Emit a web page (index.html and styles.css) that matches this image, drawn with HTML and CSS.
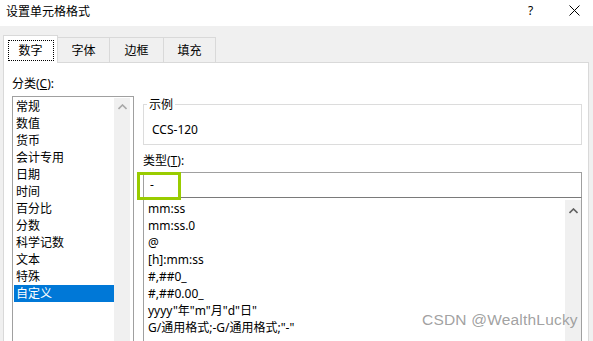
FILE: index.html
```html
<!DOCTYPE html>
<html lang="zh-CN">
<head>
<meta charset="utf-8">
<title>设置单元格格式</title>
<link rel="stylesheet" href="styles.css">
</head>
<body>
<div class="window">
  <div class="titlebar">
    <span class="title">设置单元格格式</span>
    <span class="help">?</span>
    <span class="close"><svg width="11" height="11" viewBox="0 0 11 11"><path d="M0.5 0.5 L10.5 10.5 M10.5 0.5 L0.5 10.5" stroke="#000" stroke-width="1" fill="none"/></svg></span>
  </div>
  <div class="body">
    <div class="tabs">
      <div class="tab active"><span class="focus">数字</span></div>
      <div class="tab">字体</div>
      <div class="tab">边框</div>
      <div class="tab">填充</div>
    </div>
    <div class="panel">
      <div class="left">
        <div class="label">分类(<u>C</u>):</div>
        <div class="listbox">
          <ul class="items">
            <li>常规</li>
            <li>数值</li>
            <li>货币</li>
            <li>会计专用</li>
            <li>日期</li>
            <li>时间</li>
            <li>百分比</li>
            <li>分数</li>
            <li>科学记数</li>
            <li>文本</li>
            <li>特殊</li>
            <li class="selected">自定义</li>
          </ul>
          <div class="scrollbar light"><svg width="9" height="6" viewBox="0 0 9 6"><path d="M0.5 5 L4.5 1 L8.5 5" stroke="#a8a8a8" stroke-width="1.6" fill="none"/></svg></div>
        </div>
      </div>
      <div class="right">
        <fieldset class="sample">
          <legend>示例</legend>
          <div class="sample-value">CCS-120</div>
        </fieldset>
        <div class="label type-label">类型(<u>T</u>):</div>
        <div class="input-wrap">
          <div class="input">-</div>
          <div class="highlight"></div>
        </div>
        <div class="listbox formats">
          <ul class="items">
            <li>mm:ss</li>
            <li>mm:ss.0</li>
            <li>@</li>
            <li>[h]:mm:ss</li>
            <li>#,##0_</li>
            <li>#,##0.00_</li>
            <li>yyyy"年"m"月"d"日"</li>
            <li>G/通用格式;-G/通用格式;"-"</li>
          </ul>
          <div class="scrollbar"><svg width="9" height="6" viewBox="0 0 9 6"><path d="M0.5 5 L4.5 1 L8.5 5" stroke="#606060" stroke-width="1.6" fill="none"/></svg></div>
        </div>
      </div>
    </div>
  </div>
  <div class="watermark">CSDN @WealthLucky</div>
</div>
</body>
</html>
```
FILE: styles.css
```css
html, body {
  margin: 0;
  padding: 0;
}
body {
  width: 593px;
  height: 341px;
  overflow: hidden;
  font-family: "Noto Sans", "Noto Sans CJK SC", sans-serif;
  font-size: 12px;
  color: #000;
  background: #f0f0f0;
}
.window {
  position: relative;
  width: 593px;
  height: 341px;
  overflow: hidden;
}
.titlebar {
  height: 26px;
  background: #fff;
  display: flex;
  align-items: center;
}
.title {
  padding-left: 6px;
  font-size: 12px;
  line-height: 17px;
  margin-top: -4px;
  flex: 1;
}
.help {
  width: 10px;
  margin-right: 31px;
  font-size: 12px;
  line-height: 17px;
  margin-top: -6px;
}
.close {
  width: 11px;
  height: 11px;
  margin-right: 13px;
  margin-top: -6px;
  display: flex;
}
.body {
  padding-top: 9px;
}
.tabs {
  display: flex;
  align-items: flex-end;
  margin-left: 3px;
  height: 27px;
  position: relative;
  z-index: 1;
}
.tab {
  box-sizing: border-box;
  height: 25px;
  border: 1px solid #d9d9d9;
  border-bottom: none;
  border-left: none;
  background: #f0f0f0;
  display: flex;
  align-items: center;
  justify-content: center;
  width: 52px;
  line-height: 17px;
}
.tab:nth-child(3) { width: 54px; }
.tab.active {
  height: 28px;
  width: 55px;
  border-left: 1px solid #d9d9d9;
  background: #fff;
  margin-bottom: -1px;
  padding-top: 1px;
}
.focus {
  box-sizing: border-box;
  width: 46px;
  height: 21px;
  border: 1px dotted #000;
  display: flex;
  align-items: center;
  justify-content: center;
}
.panel {
  box-sizing: border-box;
  margin: 0 4px 0 3px;
  height: 300px;
  background: #fff;
  border: 1px solid #d9d9d9;
  display: flex;
  padding: 0 6px 0 8px;
}
.left {
  width: 122px;
  flex: none;
}
.right {
  flex: 1;
  margin-left: 9px;
}
.label {
  line-height: 17px;
  height: 17px;
}
.left .label {
  margin-top: 12px;
  margin-bottom: 4px;
}
.listbox {
  box-sizing: border-box;
  border: 1px solid #a0a0a0;
  display: flex;
  padding: 1px;
  height: 260px;
}
.items {
  list-style: none;
  margin: 0;
  padding: 0;
  flex: 1;
}
.items li {
  height: 17px;
  line-height: 17px;
  padding-left: 2px;
  white-space: nowrap;
}
.items li.selected {
  background: #0078d7;
  color: #fff;
}
.scrollbar {
  width: 16px;
  flex: none;
  background: #f0f0f0;
  display: flex;
  justify-content: center;
  align-items: flex-start;
  padding-top: 6px;
  box-sizing: border-box;
}
.left .scrollbar {
  margin-right: 2px;
}
.sample {
  margin: 33px 0 0 0;
  padding: 0 0 6px 3px;
  border: 1px solid #dcdcdc;
  min-width: 0;
}
.sample legend {
  padding: 0 2px;
  line-height: 17px;
  font-size: 12px;
}
.sample-value {
  padding: 8px 0 0 5px;
  line-height: 17px;
}
.type-label {
  margin-top: 7px;
  margin-bottom: 3px;
}
.input-wrap {
  position: relative;
}
.input {
  box-sizing: border-box;
  height: 26px;
  border: 1px solid #a0a0a0;
  border-bottom-color: #7a7a7a;
  padding-left: 6px;
  line-height: 23px;
}
.highlight {
  position: absolute;
  left: -6px;
  top: 0;
  width: 44px;
  height: 28px;
  box-sizing: border-box;
  border: 3px solid #99cc00;
}
.formats {
  border-top: none;
  height: 150px;
  padding: 2px 0 0 2px;
}
.formats .items li {
  padding-left: 2px;
}
.formats .scrollbar {
  padding-top: 8px;
}
.watermark {
  position: absolute;
  left: 422px;
  top: 311px;
  font-family: "Liberation Sans", Arial, sans-serif;
  font-size: 15.5px;
  line-height: 18px;
  color: rgba(150, 150, 150, 0.9);
  letter-spacing: 0.2px;
}
```
